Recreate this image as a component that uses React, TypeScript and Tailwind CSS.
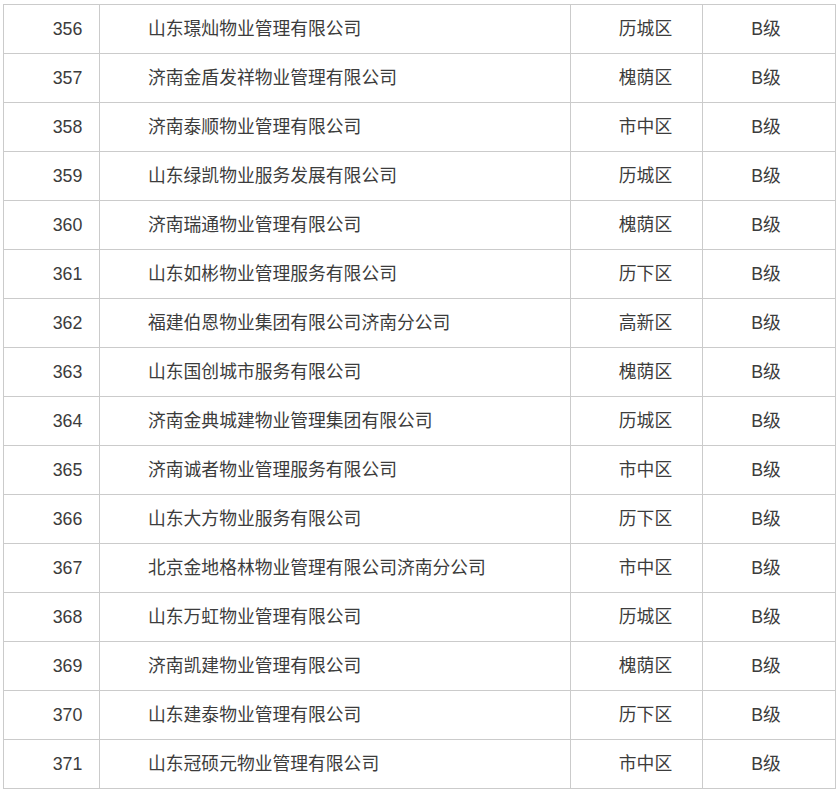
const rows: [string, string, string][] = [
  ["356", "山东璟灿物业管理有限公司", "历城区"],
  ["357", "济南金盾发祥物业管理有限公司", "槐荫区"],
  ["358", "济南泰顺物业管理有限公司", "市中区"],
  ["359", "山东绿凯物业服务发展有限公司", "历城区"],
  ["360", "济南瑞通物业管理有限公司", "槐荫区"],
  ["361", "山东如彬物业管理服务有限公司", "历下区"],
  ["362", "福建伯恩物业集团有限公司济南分公司", "高新区"],
  ["363", "山东国创城市服务有限公司", "槐荫区"],
  ["364", "济南金典城建物业管理集团有限公司", "历城区"],
  ["365", "济南诚者物业管理服务有限公司", "市中区"],
  ["366", "山东大方物业服务有限公司", "历下区"],
  ["367", "北京金地格林物业管理有限公司济南分公司", "市中区"],
  ["368", "山东万虹物业管理有限公司", "历城区"],
  ["369", "济南凯建物业管理有限公司", "槐荫区"],
  ["370", "山东建泰物业管理有限公司", "历下区"],
  ["371", "山东冠硕元物业管理有限公司", "市中区"],
];

export default function App() {
  return (
    <div className="w-[839px] h-[793px] overflow-hidden bg-white pt-[4px] pl-[3px]">
      <table
        className="border-collapse table-fixed w-[832px] text-[17.8px] text-[#3c3c3c]"
        style={{ fontFamily: '"Liberation Sans", "Noto Sans CJK SC", sans-serif' }}
      >
        <colgroup>
          <col className="w-[96px]" />
          <col className="w-[471px]" />
          <col className="w-[132px]" />
          <col className="w-[133px]" />
        </colgroup>
        <tbody>
          {rows.map(([no, name, area]) => (
            <tr key={no} className="h-[49px]">
              <td className="border border-[#cbcbcb] text-center pl-[32px] p-0">{no}</td>
              <td className="border border-[#cbcbcb] pl-[48px] p-0">{name}</td>
              <td className="border border-[#cbcbcb] text-center pl-[18px] p-0">{area}</td>
              <td className="border border-[#cbcbcb] text-center pr-[6px] p-0">B级</td>
            </tr>
          ))}
        </tbody>
      </table>
    </div>
  );
}
